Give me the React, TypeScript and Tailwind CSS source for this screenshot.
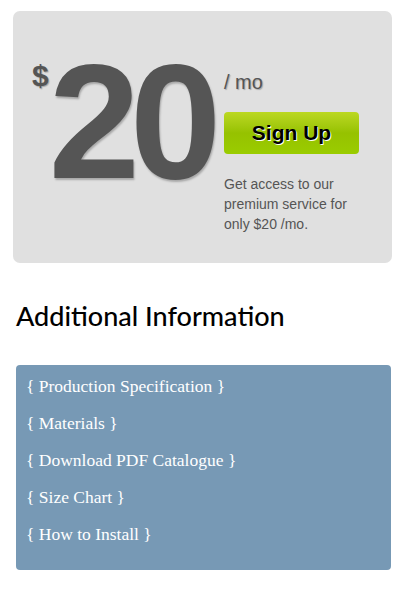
export default function App() {
  const links = [
    'Production Specification',
    'Materials',
    'Download PDF Catalogue',
    'Size Chart',
    'How to Install',
  ];

  return (
    <div className="w-[404px] h-[600px] bg-white px-[13px] pt-[11px] font-['Liberation_Sans',Arial,sans-serif]">
      <div className="w-[379px] h-[252px] bg-[#e0e0e0] rounded-[7px] flex pl-[19px] pt-[33px]">
        <div className="flex items-start w-[192px] shrink-0">
          <span className="text-[30px] leading-none font-bold text-[#555] mt-[17px] [text-shadow:1px_1px_1px_rgba(0,0,0,0.25)]">
            $
          </span>
          <span className="text-[164px] leading-none font-bold text-[#555] tracking-[-10px] mt-[-4px] [text-shadow:1px_2px_2px_rgba(0,0,0,0.25)]">
            20
          </span>
        </div>
        <div className="flex flex-col pt-[28px]">
          <div className="text-[20px] leading-none text-[#555] [text-shadow:1px_1px_1px_rgba(0,0,0,0.25)]">
            / mo
          </div>
          <button className="mt-[20px] w-[135px] h-[42px] rounded-[4px] bg-gradient-to-b from-[#bcd821] via-[#96c200] to-[#9acc00] text-[21px] font-bold text-black [text-shadow:1px_1px_0_#fff]">
            Sign Up
          </button>
          <p className="mt-[20px] w-[140px] text-[14px] leading-[20px] text-[#555]">
            Get access to our premium service for only $20 /mo.
          </p>
        </div>
      </div>

      <h2 className="mt-[39px] ml-[3px] text-[27px] leading-none text-black font-['Lato',sans-serif] font-medium">
        Additional Information
      </h2>

      <div className="mt-[36px] ml-[3px] w-[375px] h-[205px] bg-[#7799b5] rounded-[4px] pl-[10px] pt-[11px]">
        {links.map((l) => (
          <div
            key={l}
            className="h-[37px] text-[17.5px] leading-[20px] text-white font-['Liberation_Serif',serif]"
          >
            {'{ '}
            {l}
            {' }'}
          </div>
        ))}
      </div>
    </div>
  );
}
